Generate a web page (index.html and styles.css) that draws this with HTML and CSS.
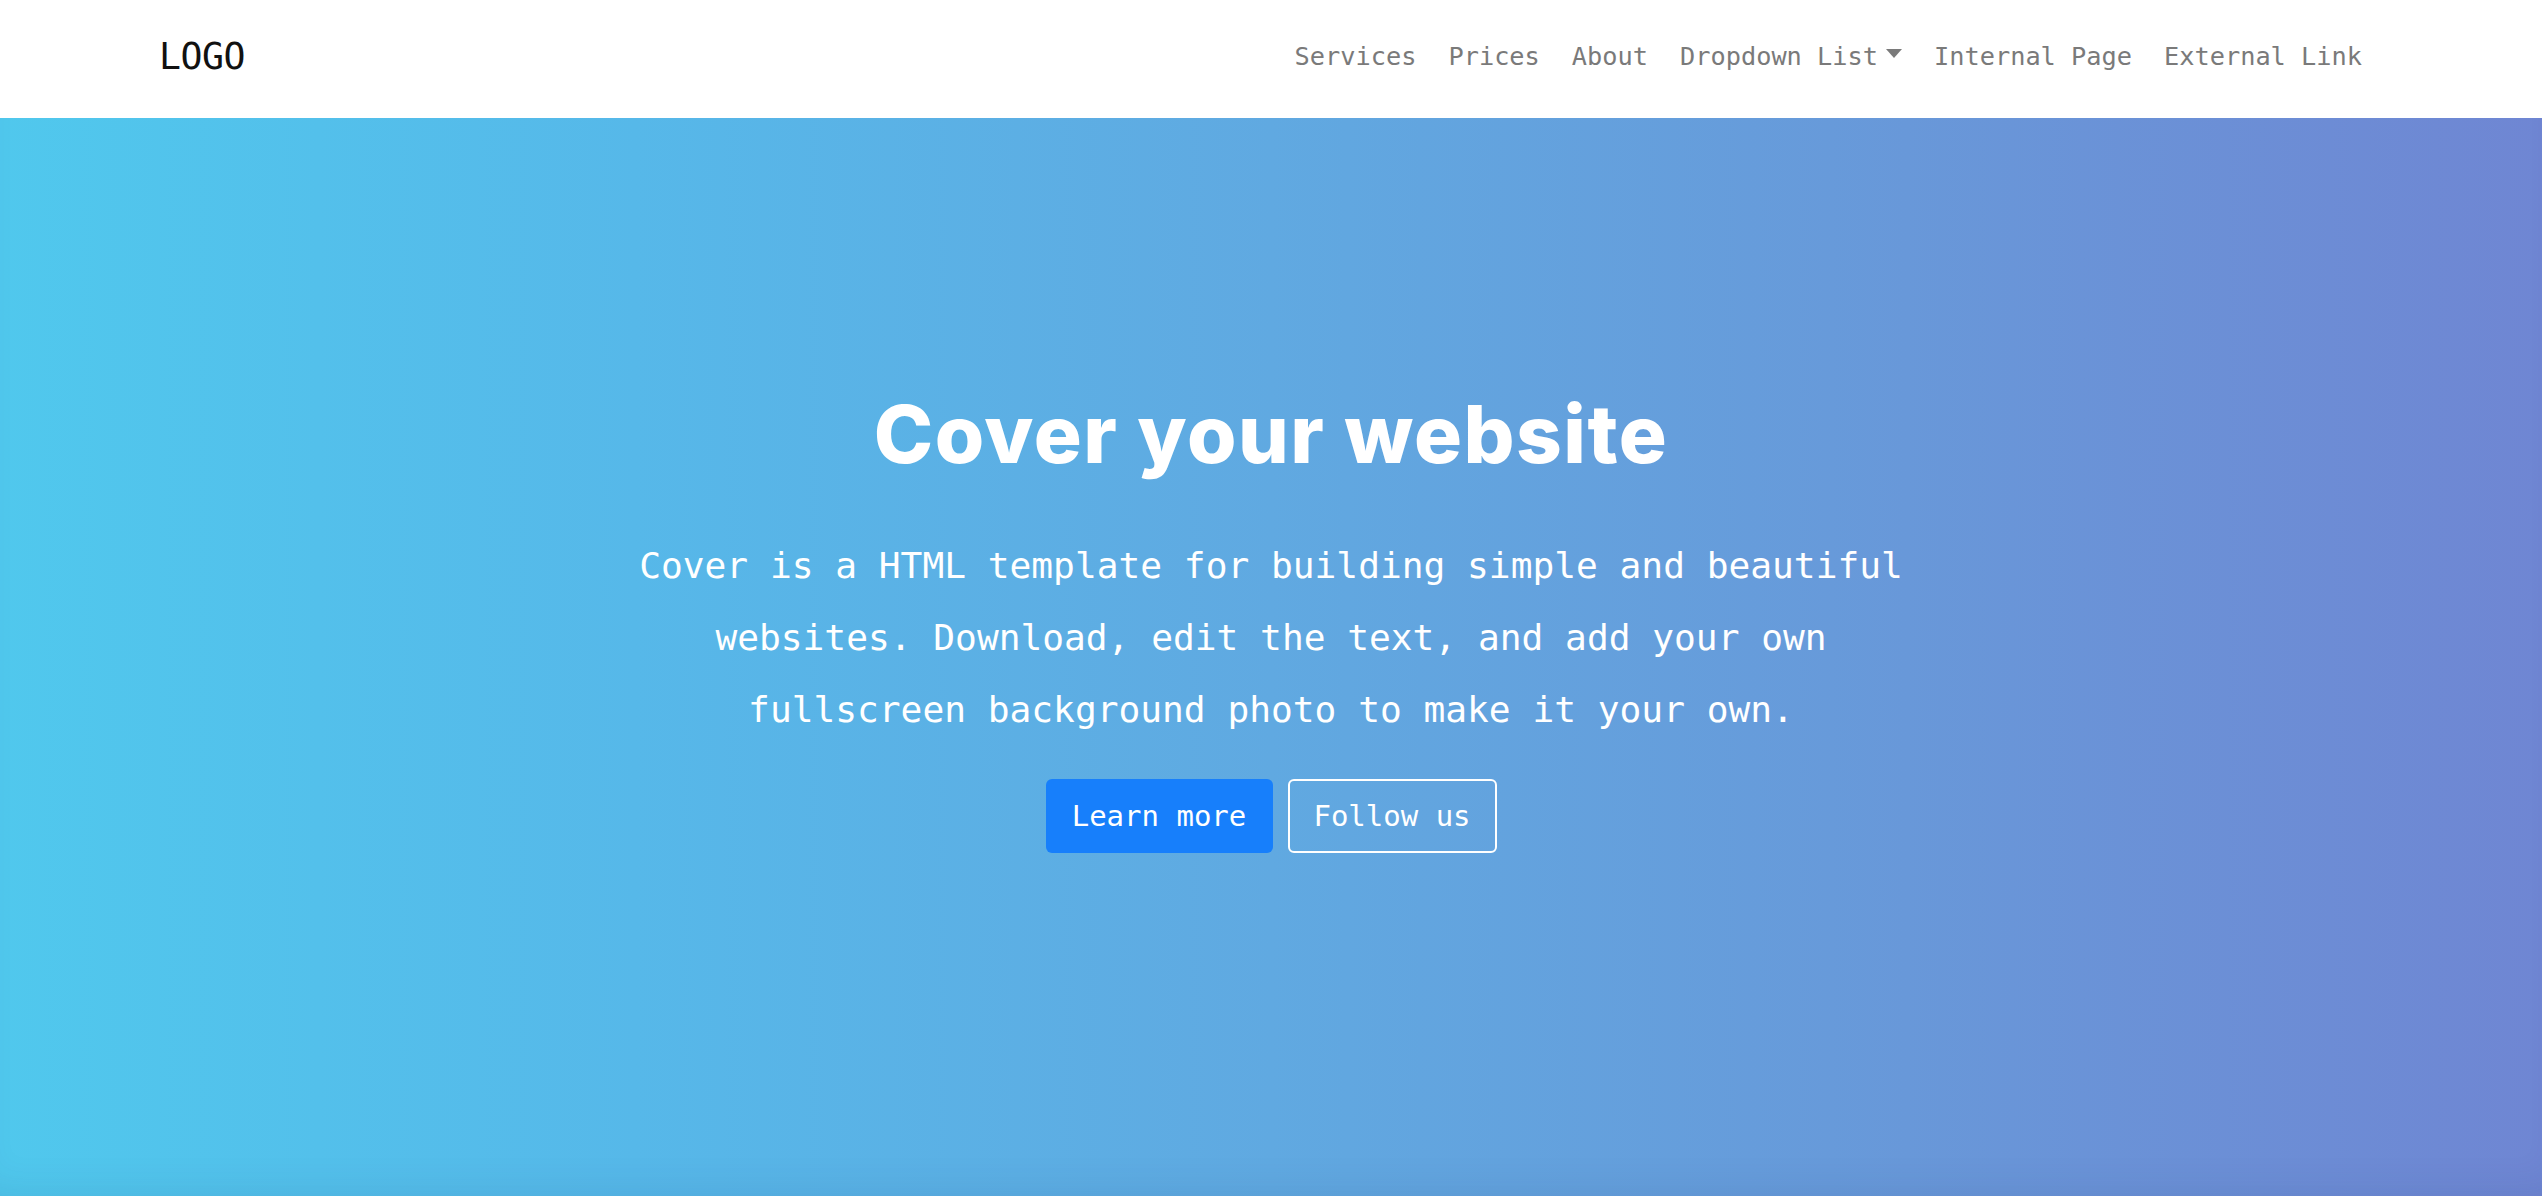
FILE: index.html
```html
<!DOCTYPE html>
<html lang="en">
<head>
<meta charset="utf-8">
<title>Cover</title>
<link rel="stylesheet" href="styles.css">
</head>
<body>
<header class="topbar">
  <a class="logo" href="#">LOGO</a>
  <nav class="menu">
    <a href="#">Services</a>
    <a href="#">Prices</a>
    <a href="#">About</a>
    <a href="#" class="dropdown">Dropdown List<span class="caret"></span></a>
    <a href="#">Internal Page</a>
    <a href="#">External Link</a>
  </nav>
</header>
<main class="hero">
  <div class="hero-inner">
    <h1 class="title">Cover your website</h1>
    <p class="lead">Cover is a HTML template for building simple and beautiful websites. Download, edit the text, and add your own fullscreen background photo to make it your own.</p>
    <div class="actions">
      <a href="#" class="btn btn-primary">Learn more</a>
      <a href="#" class="btn btn-outline">Follow us</a>
    </div>
  </div>
</main>
</body>
</html>
```
FILE: styles.css
```css
* { box-sizing: border-box; }
html, body { margin: 0; padding: 0; }
body {
  font-family: "DejaVu Sans Mono", "Liberation Mono", monospace;
  background: #fff;
  height: 1196px;
  overflow: hidden;
}
a { text-decoration: none; }

.topbar {
  height: 118px;
  display: flex;
  align-items: center;
  justify-content: space-between;
  padding: 0 164px 6px 159px;
  background: #fff;
}
.logo {
  font-family: "DejaVu Sans Mono", monospace;
  font-size: 36.5px;
  color: #111;
  letter-spacing: -0.5px;
}
.menu {
  display: flex;
  align-items: center;
}
.menu a {
  font-size: 25.3px;
  color: #7a7a7a;
  padding: 0 16px;
  display: flex;
  align-items: center;
}
.caret {
  display: inline-block;
  width: 0;
  height: 0;
  margin-left: 8px;
  margin-bottom: 6px;
  border-left: 8px solid transparent;
  border-right: 8px solid transparent;
  border-top: 9px solid #7a7a7a;
}

.hero {
  height: 1078px;
  background: linear-gradient(to right, #50c8ed 0%, #56b8e9 25%, #60a9e1 50%, #6898d9 75%, #6f86d3 100%);
  box-shadow: inset 0 -28px 40px -26px rgba(30, 60, 110, 0.12);
  color: #fff;
  display: flex;
  justify-content: center;
}
.hero-inner {
  padding-top: 268px;
  width: 1320px;
  display: flex;
  flex-direction: column;
  align-items: center;
  text-align: center;
}
.title {
  margin: 0;
  font-family: "Inter", "Liberation Sans", sans-serif;
  font-weight: 800;
  font-size: 80px;
  line-height: 96px;
  letter-spacing: 1.5px;
}
.lead {
  margin: 48px 0 0;
  font-size: 36.2px;
  line-height: 72px;
}
.actions {
  margin-top: 33px;
  display: flex;
  gap: 15px;
}
.btn {
  height: 74px;
  display: flex;
  align-items: center;
  justify-content: center;
  font-size: 29px;
  color: #fff;
  border-radius: 6px;
}
.btn-primary {
  width: 227px;
  background: #177ffb;
}
.btn-outline {
  width: 209px;
  border: 2px solid #fff;
}
```
